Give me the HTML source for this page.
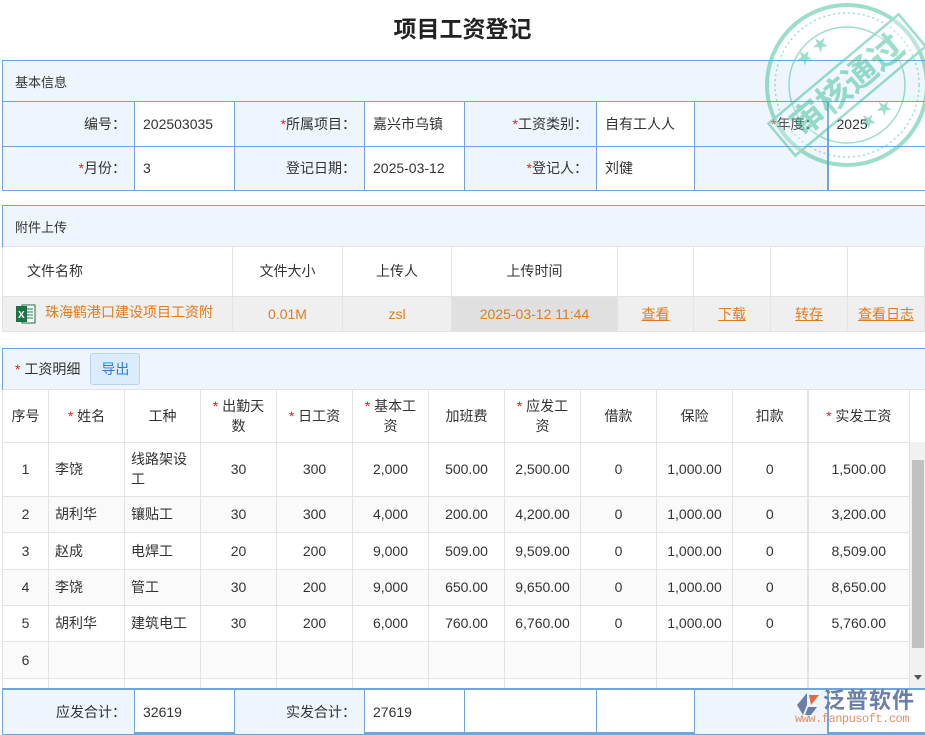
<!DOCTYPE html>
<html><head><meta charset="utf-8"><style>
*{margin:0;padding:0;box-sizing:border-box}
body{width:925px;height:735px;background:#fff;position:relative;overflow:hidden;font-family:"Liberation Sans","Noto Sans CJK SC",sans-serif;font-size:14px;color:#333}
.a{position:absolute}
.title{top:10px;left:0;width:925px;text-align:center;font-size:23px;font-weight:bold;color:#222}
.sec{left:2px;width:925px;border:1px solid #6fa5dc;border-right:none}
.hd{background:#eef5fd;padding-left:12px;display:flex;align-items:center;color:#333;font-size:13px}
table{border-collapse:collapse;table-layout:fixed}
td{border:1px solid #6fa5dc;padding:0 8px;white-space:nowrap}
.l{background:#eef5fd;text-align:right}
.r{color:#e02020}
.g td{border:1px solid #e3e3e3;text-align:center;padding:0 4px}
.lk{color:#e07b1e;text-decoration:underline}
.o{color:#e07b1e}
.t{text-align:left!important;padding-left:6px!important}
</style></head><body>
<div class="a title">项目工资登记</div>

<div class="a sec" style="top:60px;height:131px">
<div class="hd" style="height:41px;border-bottom:1px solid #6fa5dc">基本信息</div>
<table style="width:924px;margin-left:-1px;border-top:none">
<colgroup><col style="width:132px"><col style="width:100px"><col style="width:130px"><col style="width:100px"><col style="width:132px"><col style="width:98px"><col style="width:133px"><col></colgroup>
<tr style="height:44px"><td class="l" style="border-top:none">编号：</td><td style="border-top:none">202503035</td><td class="l" style="border-top:none"><span class="r">*</span>所属项目：</td><td style="border-top:none">嘉兴市乌镇</td><td class="l" style="border-top:none"><span class="r">*</span>工资类别：</td><td style="border-top:none">自有工人人</td><td class="l" style="border-top:none"><span class="r">*</span>年度：</td><td style="border-top:none;border-left:2px solid #6fa5dc">2025</td></tr>
<tr style="height:44px"><td class="l"><span class="r">*</span>月份：</td><td>3</td><td class="l">登记日期：</td><td>2025-03-12</td><td class="l"><span class="r">*</span>登记人：</td><td>刘健</td><td class="l"></td><td style="border-left:2px solid #6fa5dc"></td></tr>
</table></div>

<div class="a sec" style="top:205px;height:127px;border-bottom:2px solid #6fa5dc">
<div class="hd" style="height:41px;border-bottom:1px solid #e3e3e3">附件上传</div>
<table class="g" style="width:923px;margin-left:-1px">
<colgroup><col style="width:230px"><col style="width:110px"><col style="width:109px"><col style="width:166px"><col style="width:76px"><col style="width:77px"><col style="width:77px"><col></colgroup>
<tr style="height:49px;background:#fff"><td style="text-align:left;padding-left:24px;border-top:none">文件名称</td><td style="border-top:none">文件大小</td><td style="border-top:none">上传人</td><td style="border-top:none">上传时间</td><td style="border-top:none"></td><td style="border-top:none"></td><td style="border-top:none"></td><td style="border-top:none"></td></tr>
<tr style="height:35px;background:#efefef"><td style="text-align:left;padding-left:12px" class="o"><svg width="22" height="22" viewBox="0 0 22 22" style="vertical-align:middle;margin-right:8px"><rect x="7" y="2" width="13" height="18" fill="#fff" stroke="#1e7145"/><path d="M10 6h8M10 9h8M10 12h8M10 15h8" stroke="#1e7145"/><rect x="1" y="3" width="11" height="16" fill="#1e7145"/><text x="3" y="15" font-size="10" fill="#fff" font-family="Liberation Sans" font-weight="bold">X</text></svg>珠海鹤港口建设项目工资附</td><td class="o">0.01M</td><td class="o">zsl</td><td class="o" style="background:#e0e0e0">2025-03-12 11:44</td><td><span class="lk">查看</span></td><td><span class="lk">下载</span></td><td><span class="lk">转存</span></td><td><span class="lk">查看日志</span></td></tr>
</table></div>

<div class="a sec" style="top:348px;height:386px;border-bottom:2px solid #6fa5dc">
<div class="hd" style="height:41px;border-bottom:1px solid #e3e3e3;font-size:14px"><span class="r">*</span>&nbsp;工资明细<span style="margin-left:10px;background:#dcecfb;border:1px solid #b6d4f2;color:#2a7fd4;border-radius:3px;padding:5px 10px">导出</span></div>
<table class="g" style="width:908px;margin-left:-1px">
<colgroup><col style="width:46px"><col style="width:76px"><col style="width:76px"><col style="width:76px"><col style="width:76px"><col style="width:76px"><col style="width:76px"><col style="width:76px"><col style="width:76px"><col style="width:76px"><col style="width:75px"><col></colgroup>
<tr style="height:52px;line-height:20px"><td style="border-top:none">序号</td><td style="border-top:none"><span class="r">*</span> 姓名</td><td style="border-top:none">工种</td><td style="border-top:none"><span class="r">*</span> 出勤天<br>数</td><td style="border-top:none"><span class="r">*</span> 日工资</td><td style="border-top:none"><span class="r">*</span> 基本工<br>资</td><td style="border-top:none">加班费</td><td style="border-top:none"><span class="r">*</span> 应发工<br>资</td><td style="border-top:none">借款</td><td style="border-top:none">保险</td><td style="border-top:none">扣款</td><td style="border-top:none;border-left:2px solid #e3e3e3"><span class="r">*</span> 实发工资</td></tr>
<tr style="height:54px"><td>1</td><td class="t">李饶</td><td class="t" style="line-height:20px">线路架设<br>工</td><td>30</td><td>300</td><td>2,000</td><td>500.00</td><td>2,500.00</td><td>0</td><td>1,000.00</td><td>0</td><td style="border-left:2px solid #e3e3e3">1,500.00</td></tr>
<tr style="height:36px;background:#fafafa"><td>2</td><td class="t">胡利华</td><td class="t">镶贴工</td><td>30</td><td>300</td><td>4,000</td><td>200.00</td><td>4,200.00</td><td>0</td><td>1,000.00</td><td>0</td><td style="border-left:2px solid #e3e3e3">3,200.00</td></tr>
<tr style="height:37px"><td>3</td><td class="t">赵成</td><td class="t">电焊工</td><td>20</td><td>200</td><td>9,000</td><td>509.00</td><td>9,509.00</td><td>0</td><td>1,000.00</td><td>0</td><td style="border-left:2px solid #e3e3e3">8,509.00</td></tr>
<tr style="height:36px;background:#fafafa"><td>4</td><td class="t">李饶</td><td class="t">管工</td><td>30</td><td>200</td><td>9,000</td><td>650.00</td><td>9,650.00</td><td>0</td><td>1,000.00</td><td>0</td><td style="border-left:2px solid #e3e3e3">8,650.00</td></tr>
<tr style="height:36px"><td>5</td><td class="t">胡利华</td><td class="t">建筑电工</td><td>30</td><td>200</td><td>6,000</td><td>760.00</td><td>6,760.00</td><td>0</td><td>1,000.00</td><td>0</td><td style="border-left:2px solid #e3e3e3">5,760.00</td></tr>
<tr style="height:37px;background:#fafafa"><td>6</td><td></td><td></td><td></td><td></td><td></td><td></td><td></td><td></td><td></td><td></td><td style="border-left:2px solid #e3e3e3"></td></tr>
<tr style="height:11px"><td></td><td></td><td></td><td></td><td></td><td></td><td></td><td></td><td></td><td></td><td></td><td style="border-left:2px solid #e3e3e3"></td></tr>
</table>
<div class="a" style="left:907px;top:93px;width:16px;height:246px;background:#f1f1f1"><div style="margin:18px 2px 0;height:188px;background:#c1c1c1"></div><div style="position:absolute;bottom:4px;left:4px;border:4px solid transparent;border-top:5px solid #555"></div></div>
</div>

<div class="a" style="left:2px;top:688px;width:923px;height:45px;border-top:2px solid #6fa5dc;border-left:1px solid #6fa5dc">
<table style="width:924px;margin-left:-1px">
<colgroup><col style="width:132px"><col style="width:100px"><col style="width:130px"><col style="width:100px"><col style="width:132px"><col style="width:98px"><col style="width:133px"><col></colgroup>
<tr style="height:44px"><td class="l" style="border-top:none">应发合计：</td><td style="border-top:none">32619</td><td class="l" style="border-top:none">实发合计：</td><td style="border-top:none">27619</td><td style="border-top:none"></td><td style="border-top:none"></td><td class="l" style="border-top:none"></td><td style="border-top:none;border-left:2px solid #6fa5dc"></td></tr>
</table></div>

<svg class="a" style="left:760px;top:0" width="165" height="170" viewBox="0 0 165 170">
<g opacity="0.5" fill="none" stroke="#3cbf94">
<circle cx="87" cy="85" r="80" stroke-width="4"/>
<circle cx="87" cy="85" r="72" stroke-width="1.5" stroke-dasharray="2 3"/>
<circle cx="87" cy="85" r="58" stroke-width="1.5"/>
<g transform="rotate(-40 87 85)"><rect x="2" y="64" width="170" height="42" fill="#fff" fill-opacity="0.3" stroke-width="2.5"/>
<text x="87" y="97" text-anchor="middle" font-size="34" font-weight="bold" fill="#3cbf94" stroke="none" font-family="Noto Sans CJK SC,sans-serif">审核通过</text></g>
<text x="35" y="62" font-size="16" fill="#3cbf94" stroke="none" transform="rotate(-40 45 55)">★ ★</text>
<text x="100" y="125" font-size="16" fill="#3cbf94" stroke="none" transform="rotate(-40 110 120)">★ ★</text>
</g></svg>

<div class="a" style="left:793px;top:688px;width:130px;height:40px">
<svg class="a" style="left:0;top:3px" width="28" height="26" viewBox="0 0 28 26"><path d="M14 2 L4 14 L10 24 L14 14 Z" fill="#6a7ea8"/><path d="M16 4 L26 4 L18 14 Z" fill="#e46a3a"/><path d="M15 16 L24 16 L18 24 L12 24Z" fill="#6a7ea8"/></svg>
<div class="a" style="left:30px;top:0;font-size:22px;line-height:26px;color:#6a7ea8;font-weight:bold;letter-spacing:1px">泛普软件</div>
<div class="a" style="left:2px;top:25px;font-size:12px;line-height:12px;color:#e0906a;font-family:'Liberation Mono',monospace;letter-spacing:-0.5px">www.fanpusoft.com</div>
</div>
</body></html>
